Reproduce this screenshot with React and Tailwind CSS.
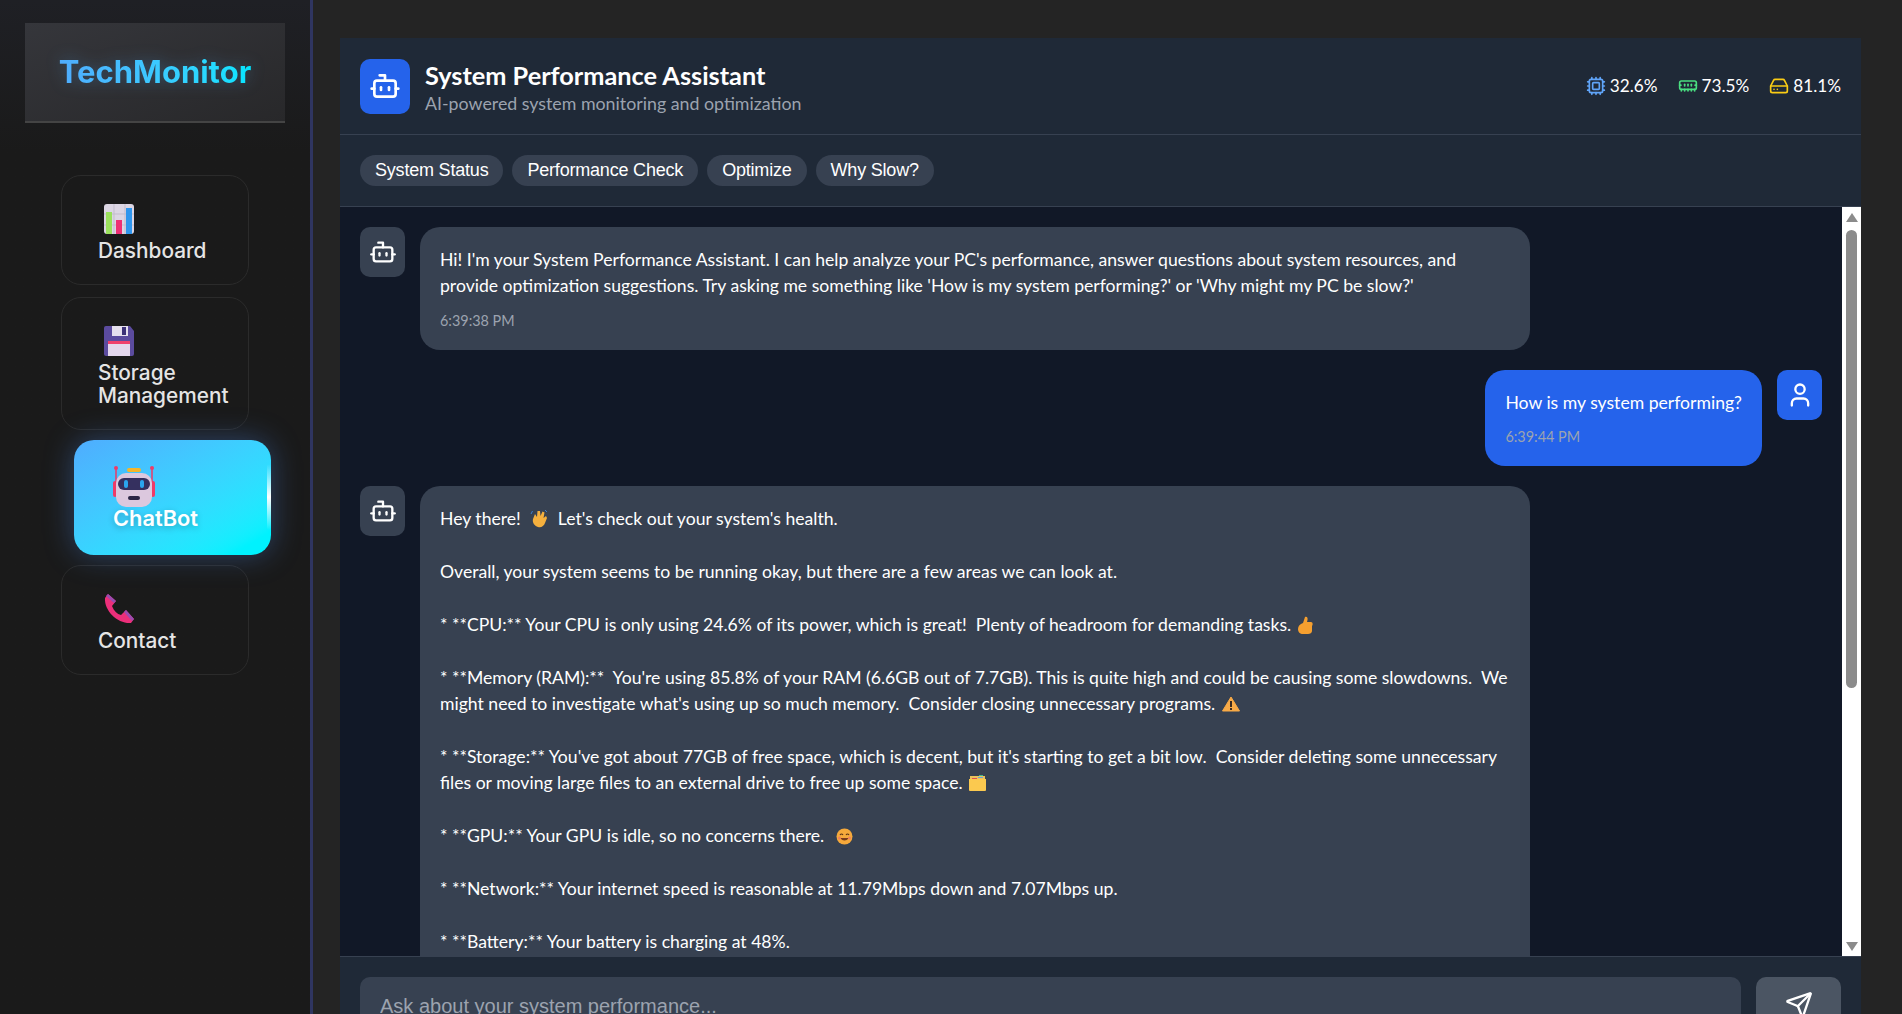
import React from "react";
import { Bot, Cpu, MemoryStick, HardDrive, User, Send } from "lucide-react";

const DashIcon = () => (
    <svg width="30" height="30" viewBox="0 0 30 30">
        <rect x="0" y="0" width="30" height="30" rx="3" fill="#dcd6e4" />
        <path d="M10 0v30M21 0v30M0 10h30M0 21h30" stroke="#c3bdcc" strokeWidth="1" />
        <rect x="2" y="8" width="6" height="22" fill="#9be15d" />
        <rect x="12" y="16" width="6" height="14" fill="#ee2f74" />
        <rect x="22" y="4" width="6" height="26" fill="#2f96ee" />
    </svg>
);

const SaveIcon = () => (
    <svg width="30" height="30" viewBox="0 0 30 30">
        <path d="M2 0h24l4 5v23a2 2 0 0 1-2 2H2a2 2 0 0 1-2-2V2a2 2 0 0 1 2-2z" fill="#5b4b9e" />
        <rect x="8" y="0" width="16" height="10" fill="#e6e0ee" />
        <rect x="18" y="1" width="4" height="8" fill="#3d3278" />
        <rect x="4" y="15" width="22" height="15" fill="#e3d6ec" />
        <rect x="4" y="15" width="22" height="3" fill="#ef3f6d" />
    </svg>
);

const RobotIcon = () => (
    <svg width="42" height="42" viewBox="0 0 42 42">
        <rect x="14" y="2" width="14" height="4" rx="2" fill="#f5b62a" />
        <path d="M3 3v16M39 3v16" stroke="#ee3b68" strokeWidth="1.5" />
        <circle cx="3" cy="2" r="2" fill="#ee3b68" />
        <circle cx="39" cy="2" r="2" fill="#ee3b68" />
        <rect x="0" y="15" width="4" height="16" rx="2" fill="#ee3b68" />
        <rect x="38" y="15" width="4" height="16" rx="2" fill="#ee3b68" />
        <rect x="3" y="7" width="36" height="34" rx="10" fill="#dcc8de" />
        <rect x="5" y="12" width="32" height="12" rx="6" fill="#35305f" />
        <rect x="11" y="14" width="4" height="8" rx="2" fill="#2aa5ee" />
        <rect x="27" y="14" width="4" height="8" rx="2" fill="#2aa5ee" />
        <rect x="15" y="30" width="12" height="4" rx="2" fill="#2b2545" />
    </svg>
);

const PhoneIcon = () => (
    <svg width="30" height="30" viewBox="0 0 30 30">
        <path d="M4 0 L12 7 L8 12 C10 17 13 20 17 21 L22 16 L30 25 L27 29 C14 30 0 17 1 4 Z" fill="#ec2f7a" />
        <path d="M4 0 L12 7 L10 9 L2 2 Z M22 16 L30 25 L28 27 L20 18 Z" fill="#9a4bb0" />
    </svg>
);

const Wave = () => (
    <svg className="inline-block align-[-3px] mx-[5px]" width="18" height="19" viewBox="0 0 18 19">
        <path d="M3 10 L5 5 L7 8 L7.5 2 L10 2 L10.5 7 L12.5 2.5 L14.5 3.5 L13.5 9 L16 7 L17 9 L15 14 C14 17 11 19 8 18 C5 17 2 14 3 10 Z" fill="#f5b03e" />
        <path d="M1 5 L2.5 2 M15 1 L17 3" stroke="#3b7fd1" strokeWidth="1" />
    </svg>
);

const Thumb = () => (
    <svg className="inline-block align-[-3px] ml-[2px]" width="15" height="18" viewBox="0 0 15 18">
        <path d="M5 7 L7 1 C9 0 10 2 9.5 4 L9 6 L13 6 C15 6 15 9 14 10 L14 15 C14 17 12 18 10 18 L5 18 C2 18 0 16 0 13 C0 10 2 8 5 7 Z" fill="#f59f2f" />
    </svg>
);

const Warn = () => (
    <svg className="inline-block align-[-2px] ml-[2px]" width="18" height="16" viewBox="0 0 18 16">
        <path d="M9 1 L17.5 15 L0.5 15 Z" fill="#f8aa47" stroke="#f8aa47" strokeLinejoin="round" />
        <rect x="8" y="5" width="2" height="6" fill="#3a2a20" />
        <rect x="8" y="12" width="2" height="2" fill="#3a2a20" />
    </svg>
);

const Folder = () => (
    <svg className="inline-block align-[-2px] ml-[2px]" width="17" height="16" viewBox="0 0 17 16">
        <rect x="10" y="0" width="4" height="2" fill="#3fb98f" />
        <rect x="1" y="1" width="15" height="5" fill="#e9c35c" />
        <rect x="3" y="3" width="5" height="1" fill="#e0524f" />
        <rect x="9" y="2" width="5" height="1" fill="#6fa6d6" />
        <path d="M0 4 H17 V15 a1 1 0 0 1-1 1 H1 a1 1 0 0 1-1-1 Z" fill="#fbc94f" />
    </svg>
);

const Smile = () => (
    <svg className="inline-block align-[-3px] ml-[3px]" width="17" height="17" viewBox="0 0 17 17">
        <circle cx="8.5" cy="8.5" r="8" fill="#f6a93b" />
        <path d="M4 7 Q5.5 5 7 7 M10 7 Q11.5 5 13 7" stroke="#5b3217" strokeWidth="1.2" fill="none" />
        <path d="M4 10 Q8.5 15 13 10 Z" fill="#7a3a1a" />
        <circle cx="3.5" cy="10" r="1.5" fill="#ef7f5e" />
        <circle cx="13.5" cy="10" r="1.5" fill="#ef7f5e" />
    </svg>
);

const NavItem = ({ icon, label }) => (
    <a className="block w-[188px] ml-[61px] rounded-[20px] border border-[#2b2b2b] pl-[36px] pr-3 pt-7 pb-[22px] text-[20.8px] leading-[23px] font-medium text-[#e5e5e5] font-['Inter',sans-serif]">
        <div className="h-[30px] ml-[6px] mb-[5px]">{icon}</div>
        {label}
    </a>
);

const Stat = ({ icon, value }) => (
    <div className="flex items-center gap-1 text-white text-[17.2px]">
        {icon}
        <span>{value}</span>
    </div>
);

const Chip = ({ label }) => (
    <button className="h-[31px] px-[15px] rounded-full bg-[#374151] text-white text-[18px] font-['Liberation_Sans',sans-serif] tracking-[-0.2px]">{label}</button>
);

const App = () => {
    return (
        <div className="flex h-[1014px] overflow-hidden bg-[#242424] font-['Lato',sans-serif]">
            <aside className="w-[313px] shrink-0 h-full border-r-[3px] border-[#2f3560] bg-gradient-to-b from-[#1f2025] to-[#1a1a1a] to-[15%]">
                <div className="mx-[25px] mt-[23px] h-[100px] flex items-center justify-center bg-gradient-to-br from-[#35363b] to-[#28282a] border-b-2 border-[#444444]">
                    <span className="text-[31px] font-bold font-['Inter',sans-serif] bg-gradient-to-r from-[#4facfe] to-[#00e5ff] bg-clip-text text-transparent drop-shadow-[0_0_8px_rgba(79,172,254,0.3)]">TechMonitor</span>
                </div>
                <nav className="mt-[52px] flex flex-col gap-[12px]">
                    <NavItem icon={<DashIcon />} label="Dashboard" />
                    <NavItem icon={<SaveIcon />} label={<>Storage<br />Management</>} />
                    <a className="relative block w-[197px] h-[115px] ml-[74px] -mt-[2px] -mb-[2px] rounded-[20px] bg-gradient-to-br from-[#4facfe] to-[#00f2fe] to-90% pl-[39px] pt-[26px] text-[21.8px] leading-6 font-semibold text-white font-['Inter',sans-serif] shadow-[0_0_30px_rgba(79,150,254,0.35)]">
                        <RobotIcon />
                        <div className="-mt-[2px] [text-shadow:0_2px_6px_rgba(0,0,0,0.25)]">ChatBot</div>
                        <span className="absolute right-0 top-[24px] h-[66px] w-[4px] rounded-full bg-gradient-to-b from-transparent via-white to-transparent" />
                    </a>
                    <NavItem icon={<PhoneIcon />} label="Contact" />
                </nav>
            </aside>

            <main className="flex-1 min-w-0 pl-[27px] pr-[41px] pt-[38px]">
                <div className="w-[1521px] h-[1100px] bg-[#1f2937] flex flex-col">
                    <header className="h-[97px] shrink-0 flex items-center justify-between px-5 border-b border-[#374151]">
                        <div className="flex items-center gap-[15px]">
                            <div className="w-[50px] h-[55px] rounded-[10px] bg-[#2563eb] flex items-center justify-center">
                                <Bot size={32} color="#ffffff" />
                            </div>
                            <div className="pt-[3px]">
                                <div className="text-[25.3px] leading-[30px] font-bold text-white">System Performance Assistant</div>
                                <div className="text-[17.8px] leading-[26px] text-[#9ca3af]">AI-powered system monitoring and optimization</div>
                            </div>
                        </div>
                        <div className="flex items-center gap-5">
                            <Stat icon={<Cpu size={20} color="#60a5fa" />} value="32.6%" />
                            <Stat icon={<MemoryStick size={20} color="#4ade80" />} value="73.5%" />
                            <Stat icon={<HardDrive size={20} color="#facc15" />} value="81.1%" />
                        </div>
                    </header>

                    <div className="h-[72px] shrink-0 flex items-center gap-[9px] px-5 border-b border-[#374151]">
                        <Chip label="System Status" />
                        <Chip label="Performance Check" />
                        <Chip label="Optimize" />
                        <Chip label="Why Slow?" />
                    </div>

                    <div className="h-[749px] shrink-0 flex bg-[#111827]">
                        <div className="flex-1 min-w-0 overflow-hidden px-5 pt-5 flex flex-col gap-5">
                            <div className="flex gap-[15px] shrink-0">
                                <div className="w-[45px] h-[50px] shrink-0 rounded-[10px] bg-[#374151] flex items-center justify-center">
                                    <Bot size={28} color="#ffffff" />
                                </div>
                                <div className="w-[1110px] rounded-[20px] bg-[#374151] px-5 pt-[20px] pb-[19px] text-white text-[17.6px] leading-[26.4px]">
                                    Hi! I'm your System Performance Assistant. I can help analyze your PC's performance, answer questions about system resources, and provide optimization suggestions. Try asking me something like 'How is my system performing?' or 'Why might my PC be slow?'
                                    <div className="mt-[11px] text-[14.4px] leading-5 text-[#9ca3af]">6:39:38 PM</div>
                                </div>
                            </div>

                            <div className="flex justify-end gap-[15px] shrink-0">
                                <div className="rounded-[20px] bg-[#2563eb] px-5 pt-[20px] pb-[19px] text-white text-[17.6px] leading-[26.4px]">
                                    How is my system performing?
                                    <div className="mt-[11px] text-[14.4px] leading-5 text-[#9ca3af]">6:39:44 PM</div>
                                </div>
                                <div className="w-[45px] h-[50px] shrink-0 rounded-[10px] bg-[#2563eb] flex items-center justify-center">
                                    <User size={28} color="#ffffff" />
                                </div>
                            </div>

                            <div className="flex gap-[15px] shrink-0">
                                <div className="w-[45px] h-[50px] shrink-0 rounded-[10px] bg-[#374151] flex items-center justify-center">
                                    <Bot size={28} color="#ffffff" />
                                </div>
                                <div className="w-[1110px] rounded-t-[20px] bg-[#374151] px-5 pt-[20px] pb-[40px] text-white text-[17.6px] leading-[26.4px] whitespace-pre-wrap">
                                    <p>Hey there! <Wave /> Let's check out your system's health.</p>
                                    <p className="mt-[26.4px]">Overall, your system seems to be running okay, but there are a few areas we can look at.</p>
                                    <p className="mt-[26.4px]">* **CPU:** Your CPU is only using 24.6% of its power, which is great!  Plenty of headroom for demanding tasks. <Thumb /></p>
                                    <p className="mt-[26.4px]">* **Memory (RAM):**  You're using 85.8% of your RAM (6.6GB out of 7.7GB). This is quite high and could be causing some slowdowns.  We might need to investigate what's using up so much memory.  Consider closing unnecessary programs. <Warn /></p>
                                    <p className="mt-[26.4px]">* **Storage:** You've got about 77GB of free space, which is decent, but it's starting to get a bit low.  Consider deleting some unnecessary files or moving large files to an external drive to free up some space. <Folder /></p>
                                    <p className="mt-[26.4px]">* **GPU:** Your GPU is idle, so no concerns there.  <Smile /></p>
                                    <p className="mt-[26.4px]">* **Network:** Your internet speed is reasonable at 11.79Mbps down and 7.07Mbps up.</p>
                                    <p className="mt-[26.4px]">* **Battery:** Your battery is charging at 48%.</p>
                                </div>
                            </div>
                        </div>

                        <div className="w-[19px] shrink-0 bg-white flex flex-col items-center pt-[6px] pb-[5px]">
                            <div className="w-0 h-0 border-x-[6px] border-x-transparent border-b-[9px] border-b-[#8b8b8b]" />
                            <div className="w-[11px] h-[458px] mt-[8px] rounded-full bg-[#8b8b8b]" />
                            <div className="flex-1" />
                            <div className="w-0 h-0 border-x-[6px] border-x-transparent border-t-[9px] border-t-[#8b8b8b]" />
                        </div>
                    </div>

                    <div className="shrink-0 flex items-start gap-[15px] border-t border-[#374151] px-5 pt-5">
                        <input placeholder="Ask about your system performance..." className="w-[1383px] h-[58px] rounded-[10px] bg-[#374151] px-5 text-[20px] text-white placeholder:text-[#9ca3af] font-['Liberation_Sans',sans-serif] outline-none" />
                        <button className="w-[85px] h-[55px] rounded-[10px] bg-[#4b5563] flex items-center justify-center">
                            <Send size={28} color="#ffffff" />
                        </button>
                    </div>
                </div>
            </main>
        </div>
    );
};

export default App;
